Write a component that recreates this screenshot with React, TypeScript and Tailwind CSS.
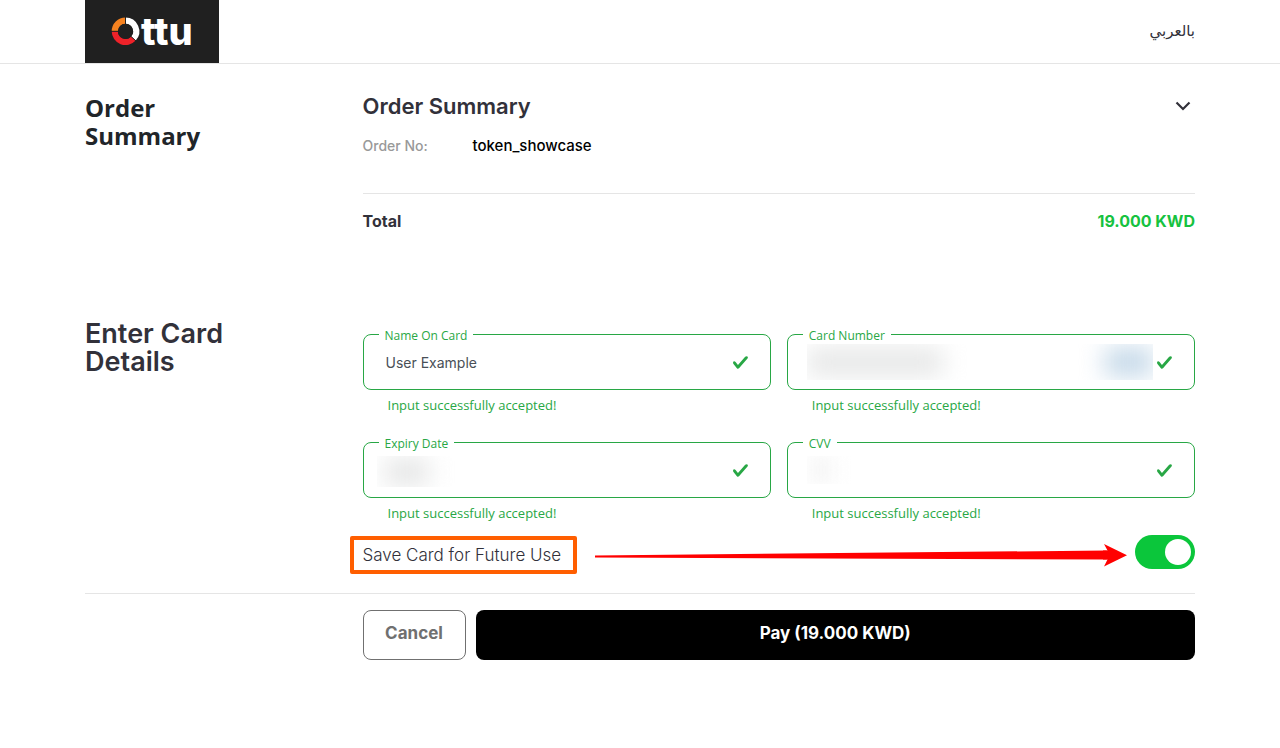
import { useState, type ReactNode } from "react";

function Logo() {
  return (
    <a href="#" aria-label="Ottu" className="block h-[63px] w-[134px] bg-[#202020]">
      <svg viewBox="0 0 134 63" className="block h-full w-full">
        <g fill="none" strokeWidth="6.2">
          <path d="M29.8 31.3A10.7 10.7 0 0 1 40.5 20.6" stroke="#f58220" />
          <path d="M29.8 31.3A10.7 10.7 0 0 0 48.4 38.5" stroke="#ee2229" />
          <path d="M40.5 20.6A10.7 10.7 0 0 1 48.4 38.5" stroke="#fff" />
        </g>
        <path d="M40.5 31.3V16M40.5 31.3H25M40.5 31.3L51.5 41.5" stroke="#202020" strokeWidth="1" />
        <circle cx="40.5" cy="31.3" r="7.6" fill="#202020" />
        <text x="56" y="45" fill="#fff" fontFamily="Inter, sans-serif" fontWeight="800" fontSize="38">
          ttu
        </text>
      </svg>
    </a>
  );
}

function CheckMark() {
  return (
    <svg viewBox="0 0 8 8" className="pointer-events-none absolute top-5 right-[22px] h-[17px] w-[17px]" fill="#28a745" aria-hidden="true">
      <path d="M2.3 6.73L.6 4.53c-.4-1.04.46-1.4 1.1-.8l1.1 1.4 3.4-3.8c.6-.63 1.6-.27 1.2.7l-4 4.6c-.43.5-.8.4-1.1.1z" />
    </svg>
  );
}

type FieldProps = {
  id: string;
  label: string;
  initial?: string;
  children?: ReactNode;
};

function Field({ id, label, initial = "", children }: FieldProps) {
  const [value, setValue] = useState(initial);
  return (
    <div>
      <div className="relative">
        <input
          id={id}
          value={value}
          onChange={(e) => setValue(e.target.value)}
          className="block h-14 w-full rounded-lg border border-[#28a745] bg-white pr-12 pl-[22px] font-['Inter',sans-serif] text-sm text-[#495057] outline-none"
        />
        <label htmlFor={id} className="absolute -top-2 left-4 bg-white px-1.5 text-xs leading-5 text-[#28a745]">
          {label}
        </label>
        {children}
        <CheckMark />
      </div>
      <p className="pt-[5px] pl-[25px] text-[13px] leading-5 text-[#28a745]">Input successfully accepted!</p>
    </div>
  );
}

export default function App() {
  const [open, setOpen] = useState(true);
  const [save, setSave] = useState(true);

  return (
    <div className="bg-white font-['Open_Sans','Noto_Sans',sans-serif] text-[#212529]">
      <header className="border-b border-[#e5e5e5]">
        <div className="mx-auto flex max-w-[1140px] items-center justify-between px-[15px]">
          <Logo />
          <a href="#" lang="ar" dir="rtl" className="pb-0.5 font-['DejaVu_Sans',sans-serif] text-[15px] leading-6 text-[#32313a]">
            بالعربي
          </a>
        </div>
      </header>

      <main className="mx-auto max-w-[1140px] px-[15px]">
        <section className="grid grid-cols-4 pt-[30px]">
          <h2 className="pr-32 text-2xl leading-7 font-bold">Order Summary</h2>
          <div className="col-span-3">
            <button
              type="button"
              aria-expanded={open}
              onClick={() => setOpen(!open)}
              className="flex w-full items-center justify-between pr-1 text-left font-['Inter',sans-serif] text-[22px] leading-6 font-semibold text-[#32313a]"
            >
              Order Summary
              <svg viewBox="0 0 16 10" className="h-2.5 w-4" fill="none" stroke="#32313a" strokeWidth="2.2" aria-hidden="true">
                <path d="M1.5 1.5L8 8L14.5 1.5" />
              </svg>
            </button>
            {open && (
              <dl className="flex items-center pt-4 pb-[35px] font-['Inter',sans-serif] leading-6">
                <dt className="w-[110px] text-sm leading-6 font-medium text-[#999]">Order No:</dt>
                <dd className="text-[15px] font-medium text-black">token_showcase</dd>
              </dl>
            )}
            <div className="flex justify-between border-t border-[#e5e5e5] pt-[15px] font-['Inter',sans-serif] text-base leading-6 font-bold">
              <span className="text-[#32313a]">Total</span>
              <span className="text-[#16c240]">19.000 KWD</span>
            </div>
          </div>
        </section>

        <form onSubmit={(e) => e.preventDefault()}>
          <section className="grid grid-cols-4 pt-[87px]">
            <h2 className="pr-28 font-['Inter',sans-serif] text-[27px] leading-7 font-semibold text-[#32313a]">
              Enter Card Details
            </h2>
            <div className="col-span-3 pt-3.5">
              <div className="grid grid-cols-2 gap-x-4 gap-y-[27px]">
                <Field id="name" label="Name On Card" initial="User Example" />
                <Field id="number" label="Card Number">
                  <div className="absolute top-2.5 left-5 h-9 w-40 overflow-hidden">
                    <div className="mt-1 h-7 w-34 bg-[#e6e7e7] blur-[12px]" />
                  </div>
                  <div className="absolute top-2.5 right-[42px] h-9 w-20 overflow-hidden">
                    <div className="mt-1 ml-8 h-7 w-12 bg-[#c2d7e8] blur-[12px]" />
                  </div>
                </Field>
                <Field id="expiry" label="Expiry Date">
                  <div className="absolute top-3.5 left-3.5 h-[31px] w-20 overflow-hidden">
                    <div className="mt-1 ml-2 h-6 w-11 bg-[#e2e3e3] blur-[12px]" />
                  </div>
                </Field>
                <Field id="cvv" label="CVV">
                  <div className="absolute top-3.5 left-5 h-7 w-12 overflow-hidden">
                    <div className="h-full w-7 bg-[#f7f7f7] blur-[9px]" />
                  </div>
                </Field>
              </div>
              <div className="flex items-center pt-3">
                <label htmlFor="save" className="relative mt-1.5 shrink-0 font-['Inter',sans-serif] text-[17px] leading-6 font-light whitespace-nowrap text-[#32313a]">
                  Save Card for Future Use
                  <span className="pointer-events-none absolute -inset-y-[7px] -right-4 -left-[13px] rounded-xs border-4 border-[#ff5e00]" />
                </label>
                <div className="mt-1.5 flex min-w-0 flex-1 items-center pr-2 pl-[34px]" aria-hidden="true">
                  <svg viewBox="0 0 510 24" preserveAspectRatio="none" className="h-6 w-0 min-w-0 flex-1" fill="#f00">
                    <path d="M0 12.5L510 7.5V16.5L0 14.5Z" />
                  </svg>
                  <svg viewBox="0 0 24 24" className="-ml-1 h-6 w-6" fill="#f00">
                    <path d="M1 1L24 12.3L1 23.5L4.5 16.5H0V7.5H4.5Z" />
                  </svg>
                </div>
                <input
                  id="save"
                  type="checkbox"
                  role="switch"
                  checked={save}
                  onChange={() => setSave(!save)}
                  className="h-[34px] w-[60px] shrink-0 cursor-pointer appearance-none rounded-full bg-[#ccc] p-1 before:block before:size-[26px] before:rounded-full before:bg-white checked:bg-[#0bc63b] checked:before:ml-[26px]"
                />
              </div>
            </div>
          </section>

          <div className="mt-6 grid grid-cols-4 border-t border-[#e5e5e5] pt-4">
            <div className="col-span-3 col-start-2 flex gap-2.5 font-['Inter',sans-serif] text-[17px] font-bold">
              <button type="button" className="h-[50px] w-[103px] rounded-lg border border-[#707070] pb-0.5 text-[#707070]">
                Cancel
              </button>
              <button type="submit" className="h-[50px] flex-1 rounded-lg bg-black pb-0.5 text-white">
                Pay (19.000 KWD)
              </button>
            </div>
          </div>
        </form>
      </main>
    </div>
  );
}
